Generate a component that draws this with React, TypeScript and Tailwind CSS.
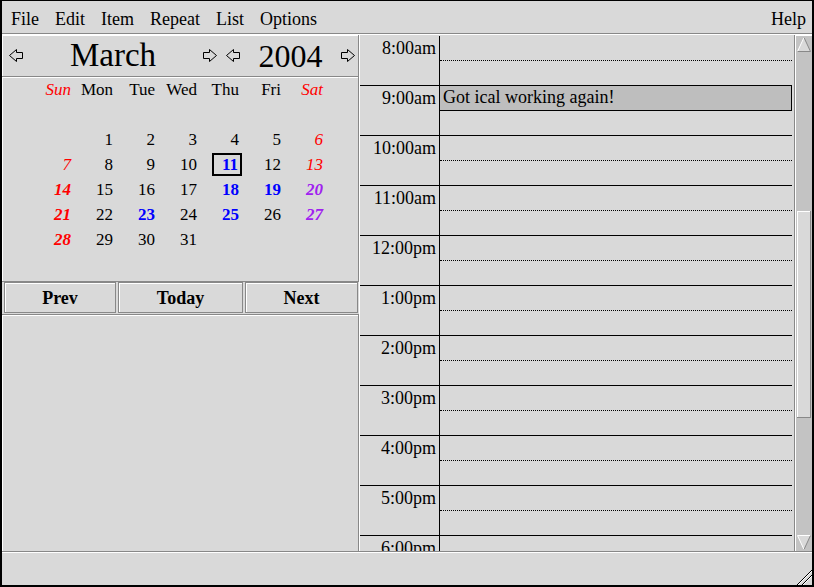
import React from "react";

type Tone = "red" | "blue" | "purple";
type Cell = { n: number; tone?: Tone; bold?: boolean; italic?: boolean; sel?: boolean } | null;

const toneClass: Record<Tone, string> = {
  red: "text-[#ff0000]",
  blue: "text-[#0000ff]",
  purple: "text-[#a020f0]",
};

const sun = (n: number, bold = false): Cell => ({ n, tone: "red", italic: true, bold });
const sat = (n: number, bold = false): Cell => ({ n, tone: "red", italic: true, bold });
const d = (n: number): Cell => ({ n });
const busy = (n: number): Cell => ({ n, tone: "blue", bold: true });

const weeks: Cell[][] = [
  [null, null, null, null, null, null, null],
  [null, d(1), d(2), d(3), d(4), d(5), sat(6)],
  [sun(7), d(8), d(9), d(10), { n: 11, tone: "blue", bold: true, sel: true }, d(12), sat(13)],
  [sun(14, true), d(15), d(16), d(17), busy(18), busy(19), { n: 20, tone: "purple", bold: true, italic: true }],
  [sun(21, true), d(22), busy(23), d(24), busy(25), d(26), { n: 27, tone: "purple", bold: true, italic: true }],
  [sun(28, true), d(29), d(30), d(31), null, null, null],
  [null, null, null, null, null, null, null],
];

const hours = [
  "8:00am",
  "9:00am",
  "10:00am",
  "11:00am",
  "12:00pm",
  "1:00pm",
  "2:00pm",
  "3:00pm",
  "4:00pm",
  "5:00pm",
  "6:00pm",
];

function OutlineArrow({ dir }: { dir: "left" | "right" }) {
  const pts =
    dir === "left"
      ? "0.5,6.5 7.5,0.5 7.5,3.5 13.5,3.5 13.5,9.5 7.5,9.5 7.5,12.5"
      : "13.5,6.5 6.5,0.5 6.5,3.5 0.5,3.5 0.5,9.5 6.5,9.5 6.5,12.5";
  return (
    <svg width="14" height="13" viewBox="0 0 14 13" className="shrink-0 block">
      <polygon points={pts} fill="none" stroke="#000" strokeWidth="1" />
    </svg>
  );
}

function ScrollArrow({ up }: { up: boolean }) {
  return (
    <svg width="14" height="15" viewBox="0 0 14 15" className="block">
      {up ? (
        <>
          <polygon points="7,0.5 13.5,14.5 0.5,14.5" fill="#d9d9d9" />
          <line x1="0.5" y1="14.5" x2="7" y2="0.5" stroke="#ffffff" strokeWidth="1" />
          <line x1="7" y1="0.5" x2="13.5" y2="14.5" stroke="#888888" strokeWidth="1" />
          <line x1="0.5" y1="14.5" x2="13.5" y2="14.5" stroke="#888888" strokeWidth="1" />
        </>
      ) : (
        <>
          <polygon points="0.5,0.5 13.5,0.5 7,14.5" fill="#d9d9d9" />
          <line x1="0.5" y1="0.5" x2="13.5" y2="0.5" stroke="#ffffff" strokeWidth="1" />
          <line x1="0.5" y1="0.5" x2="7" y2="14.5" stroke="#ffffff" strokeWidth="1" />
          <line x1="13.5" y1="0.5" x2="7" y2="14.5" stroke="#888888" strokeWidth="1" />
        </>
      )}
    </svg>
  );
}

function DayCell({ cell }: { cell: Cell }) {
  if (!cell) return <div className="h-[25px]" />;
  const cls = [
    cell.tone ? toneClass[cell.tone] : "text-black",
    cell.bold ? "font-bold" : "font-normal",
    cell.italic ? "italic" : "",
  ].join(" ");
  if (cell.sel) {
    return (
      <div className="h-[25px] flex items-center justify-end">
        <span
          className={`mr-[-3px] w-[30px] h-[23px] border-2 border-black flex items-center justify-end pr-[2px] leading-none ${cls}`}
        >
          {cell.n}
        </span>
      </div>
    );
  }
  return (
    <div className={`h-[25px] flex items-center justify-end leading-none ${cls}`}>{cell.n}</div>
  );
}

const dayNames = [
  { t: "Sun", c: "text-[#ff0000] italic" },
  { t: "Mon", c: "" },
  { t: "Tue", c: "" },
  { t: "Wed", c: "" },
  { t: "Thu", c: "" },
  { t: "Fri", c: "" },
  { t: "Sat", c: "text-[#ff0000] italic" },
];

export default function App() {
  return (
    <div className="w-[814px] h-[587px] overflow-hidden bg-[#d9d9d9] border-black border-t border-l-2 border-r-2 border-b-2 flex flex-col text-black font-['Liberation_Serif','Times_New_Roman',serif]">
      {/* menu bar */}
      <div className="h-[33px] shrink-0 flex items-center pl-[9px] pr-[6px] pt-[4px] text-[18px] leading-none border-b border-[#888]">
        <div className="flex gap-[16px]">
          <span>File</span>
          <span>Edit</span>
          <span>Item</span>
          <span>Repeat</span>
          <span>List</span>
          <span>Options</span>
        </div>
        <span className="ml-auto">Help</span>
      </div>
      <div className="h-px shrink-0 bg-white" />

      {/* main area */}
      <div className="h-[516px] shrink-0 flex">
        {/* left: month calendar */}
        <div className="w-[357px] shrink-0 flex flex-col">
          <div className="h-[42px] shrink-0 flex items-center border-r border-b border-[#888] shadow-[inset_1px_1px_0_#fff] pl-[7px]">
            <OutlineArrow dir="left" />
            <span className="w-[180px] text-center text-[33px] leading-none">March</span>
            <OutlineArrow dir="right" />
            <span className="w-[9px]" />
            <OutlineArrow dir="left" />
            <span className="w-[101px] text-center text-[32px] leading-none">2004</span>
            <OutlineArrow dir="right" />
          </div>

          <div className="h-[205px] shrink-0 border-r border-b border-[#888] shadow-[inset_1px_1px_0_#fff] text-[17px]">
            <div className="ml-[27px] grid grid-cols-[repeat(7,42px)]">
              {dayNames.map((n) => (
                <div key={n.t} className={`h-[25px] flex items-center justify-end leading-none ${n.c}`}>
                  {n.t}
                </div>
              ))}
              {weeks.map((w, wi) => w.map((c, ci) => <DayCell key={`${wi}-${ci}`} cell={c} />))}
            </div>
          </div>

          <div className="h-[32px] shrink-0 flex gap-[2px] pl-[2px] text-[18px] font-bold">
            {[
              { t: "Prev", w: "w-[112px]" },
              { t: "Today", w: "w-[125px]" },
              { t: "Next", w: "w-[113px]" },
            ].map((b) => (
              <div
                key={b.t}
                className={`${b.w} h-[31px] flex items-center justify-center border border-[#888] shadow-[inset_1px_1px_0_#fff] leading-none`}
              >
                {b.t}
              </div>
            ))}
          </div>

          <div className="flex-1 border-r border-t border-[#888] shadow-[inset_1px_1px_0_#fff]" />
        </div>
        <div className="w-px bg-white shrink-0" />

        {/* right: day view */}
        <div className="w-[432px] shrink-0 pt-px overflow-hidden text-[18px]">
          {hours.map((h, i) => (
            <div key={h} className="h-[50px] flex border-b border-black">
              <div className="w-[80px] shrink-0 border-r border-black text-right pr-[3px] pt-[3px] leading-[18px]">
                {h}
              </div>
              <div className="flex-1 flex flex-col">
                {i === 1 ? (
                  <div className="h-[25px] bg-[#bebebe] border-b border-r border-black pl-[3px] pt-[2px] leading-[18px]">
                    Got ical working again!
                  </div>
                ) : (
                  <div className="h-[25px] border-b border-dotted border-black" />
                )}
              </div>
            </div>
          ))}
        </div>
        <div className="w-[2px] shrink-0" />

        {/* scrollbar */}
        <div className="w-[18px] shrink-0 border-l border-[#888] shadow-[inset_1px_1px_0_#fff] bg-[#c3c3c3] flex flex-col items-center pt-[2px]">
          <ScrollArrow up />
          <div className="h-[159px] shrink-0" />
          <div className="w-[14px] h-[207px] shrink-0 bg-[#d9d9d9] border-r border-b border-[#888] shadow-[inset_1px_1px_0_#fff]" />
          <div className="h-[117px] shrink-0" />
          <ScrollArrow up={false} />
        </div>
      </div>

      <div className="h-px shrink-0 bg-[#888]" />
      <div className="h-px shrink-0 bg-white" />

      {/* status bar */}
      <div className="flex-1 relative">
        <svg width="16" height="16" viewBox="0 0 16 16" className="absolute right-0 bottom-0 block">
          <line x1="16" y1="1" x2="1" y2="16" stroke="#000" strokeWidth="1" />
          <line x1="16" y1="2" x2="2" y2="16" stroke="#fff" strokeWidth="1" />
          <line x1="16" y1="6" x2="6" y2="16" stroke="#000" strokeWidth="1" />
          <line x1="16" y1="7" x2="7" y2="16" stroke="#fff" strokeWidth="1" />
        </svg>
      </div>
    </div>
  );
}
